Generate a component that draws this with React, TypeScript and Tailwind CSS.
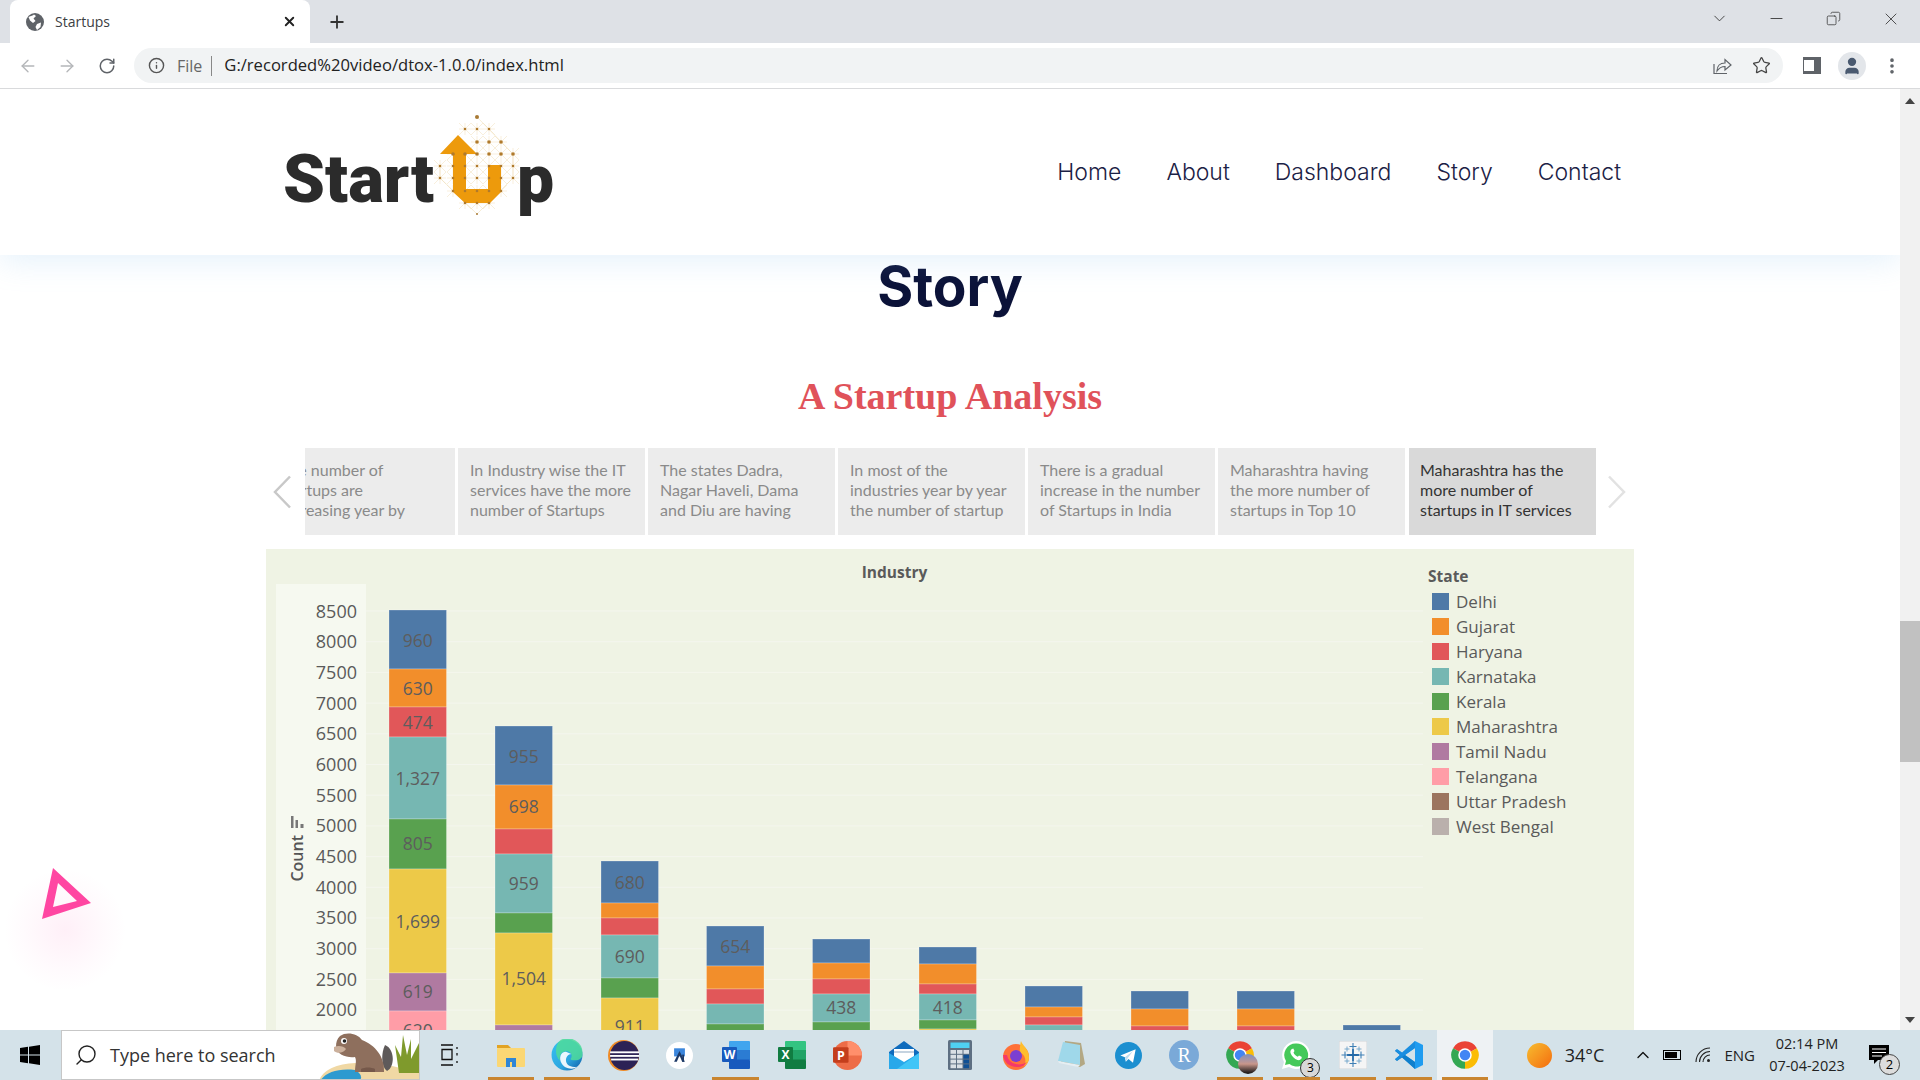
import { ArrowLeft, ArrowRight, ChevronDown, ChevronUp, Copy, Info, Minus, MoreVertical, Plus, RotateCw, Search, Star, User, X } from "lucide-react";

const firstTile = ["The number of", "startups are", "increasing year by"];

const tiles = [
  ["In Industry wise the IT", "services have the more", "number of Startups"],
  ["The states Dadra,", "Nagar Haveli, Dama", "and Diu are having"],
  ["In most of the", "industries year by year", "the number of startup"],
  ["There is a gradual", "increase in the number", "of Startups in India"],
  ["Maharashtra having", "the more number of", "startups in Top 10"],
];

const lastTile = ["Maharashtra has the", "more number of", "startups in IT services"];

const colors: Record<string, string> = {
  blue: "#4e79a7",
  orange: "#f28e2b",
  red: "#e15759",
  teal: "#76b7b2",
  green: "#59a14f",
  yellow: "#edc948",
  purple: "#b07aa1",
  pink: "#ff9da7",
};

const legend = [
  ["Delhi", "bg-[#4e79a7]"],
  ["Gujarat", "bg-[#f28e2b]"],
  ["Haryana", "bg-[#e15759]"],
  ["Karnataka", "bg-[#76b7b2]"],
  ["Kerala", "bg-[#59a14f]"],
  ["Maharashtra", "bg-[#edc948]"],
  ["Tamil Nadu", "bg-[#b07aa1]"],
  ["Telangana", "bg-[#ff9da7]"],
  ["Uttar Pradesh", "bg-[#9c755f]"],
  ["West Bengal", "bg-[#bab0ac]"],
];

const ticks = [8500, 8000, 7500, 7000, 6500, 6000, 5500, 5000, 4500, 4000, 3500, 3000, 2500, 2000];

// y values are page pixels, the svg starts at y=584 and x=366
const bars = [
  {
    x: 389,
    segs: [
      ["blue", 610, "960", 641],
      ["orange", 669, "630", 689],
      ["red", 707, "474", 723],
      ["teal", 737, "1,327", 779],
      ["green", 819, "805", 844],
      ["yellow", 869, "1,699", 922],
      ["purple", 973, "619", 992],
      ["pink", 1011, "620", 1031],
    ],
  },
  {
    x: 495,
    segs: [
      ["blue", 726, "955", 757],
      ["orange", 785, "698", 807],
      ["red", 829],
      ["teal", 854, "959", 884],
      ["green", 913],
      ["yellow", 933, "1,504", 979],
      ["purple", 1025],
    ],
  },
  {
    x: 601,
    segs: [
      ["blue", 861, "680", 883],
      ["orange", 903],
      ["red", 918],
      ["teal", 935, "690", 957],
      ["green", 978],
      ["yellow", 998, "911", 1027],
    ],
  },
  {
    x: 706.5,
    segs: [
      ["blue", 926, "654", 947],
      ["orange", 966],
      ["red", 989],
      ["teal", 1004],
      ["green", 1024],
    ],
  },
  {
    x: 812.5,
    segs: [
      ["blue", 939],
      ["orange", 963],
      ["red", 979],
      ["teal", 994, "438", 1008],
      ["green", 1022],
    ],
  },
  {
    x: 919,
    segs: [
      ["blue", 947],
      ["orange", 964],
      ["red", 984],
      ["teal", 994, "418", 1008],
      ["green", 1020],
      ["yellow", 1029],
    ],
  },
  {
    x: 1025,
    segs: [
      ["blue", 986],
      ["orange", 1007],
      ["red", 1017],
      ["teal", 1025],
    ],
  },
  {
    x: 1131,
    segs: [
      ["blue", 991],
      ["orange", 1009],
      ["red", 1026],
    ],
  },
  {
    x: 1237,
    segs: [
      ["blue", 991],
      ["orange", 1009],
      ["red", 1026],
    ],
  },
  { x: 1343, segs: [["blue", 1025]] },
] as { x: number; segs: (string | number)[][] }[];

const logoRows: [number, number[]][] = [
  [29, [205, 217, 229]],
  [42, [217, 229, 241]],
  [54, [193, 205, 217, 229, 241, 253]],
  [66, [180, 193, 205, 217, 229, 241, 253]],
  [78, [180, 193, 205, 217, 229, 241, 253]],
  [91, [193, 205, 217, 229, 241]],
  [103, [205, 217, 229]],
];

function Logo() {
  const dots = logoRows.flatMap(([y, xs]) => xs.map((x) => [x, y]));
  return (
    <svg viewBox="0 0 320 130" className="w-[320px] h-[130px] shrink-0">
      {dots.map(([x, y]) => (
        <path key={`${x}-${y}`} d={`M${x - 6} ${y - 6}L${x + 6} ${y + 6}M${x + 6} ${y - 6}L${x - 6} ${y + 6}M${x - 6} ${y}H${x + 6}M${x} ${y - 6}V${y + 6}`} stroke="#f0dfb8" strokeWidth="0.5" />
      ))}
      <path d="M217 17L253 54V78L217 114L180 78V66" fill="none" stroke="#f0dfb8" strokeWidth="0.6" />
      <path d="M198 35L217 54H206V89H228V65H241V92L230 103H205L193 92V54H180Z" fill="#ed9a0c" />
      {dots.map(([x, y]) => (
        <circle key={`${x}/${y}`} cx={x} cy={y} r={y === 42 || y === 54 ? 1.8 : 1.3} fill="#b07a2c" />
      ))}
      <circle cx="217" cy="17" r="2" fill="#a87a35" />
      <circle cx="217" cy="114" r="1" fill="#a87a35" />
      <text x="23" y="102" fontFamily="Roboto, sans-serif" fontWeight="900" fontSize="66" fill="#2b2b2b" textLength="151" lengthAdjust="spacingAndGlyphs">
        Start
      </text>
      <text x="257" y="102" fontFamily="Roboto, sans-serif" fontWeight="900" fontSize="66" fill="#2b2b2b">
        p
      </text>
    </svg>
  );
}

function ChromeIcon({ size = 34 }: { size?: number }) {
  return (
    <svg viewBox="0 0 24 24" width={size} height={size}>
      <path d="M12 12L2.47 6.5A11 11 0 0 1 21.53 6.5Z" fill="#ea4335" />
      <path d="M12 12L21.53 6.5A11 11 0 0 1 12 23Z" fill="#fbbc04" />
      <path d="M12 12L12 23A11 11 0 0 1 2.47 6.5Z" fill="#34a853" />
      <circle cx="12" cy="12" r="5.4" fill="#fff" />
      <circle cx="12" cy="12" r="4.2" fill="#4285f4" />
    </svg>
  );
}

function Explorer() {
  return (
    <svg viewBox="0 0 30 30" width="30" height="30">
      <path d="M1 5h11l3 3H1z" fill="#e2a323" />
      <rect x="1" y="8" width="28" height="19" rx="1" fill="#fbd774" />
      <path d="M10 27v-9h10v9h-4v-5h-2v5z" fill="#2f86d6" />
    </svg>
  );
}

function Edge() {
  return (
    <svg viewBox="0 0 30 30" width="32" height="32">
      <defs>
        <linearGradient id="edgeA" x1="0" y1="0" x2="1" y2="1">
          <stop offset="0" stopColor="#35c1f1" />
          <stop offset="0.6" stopColor="#2da6e0" />
          <stop offset="1" stopColor="#0c59a4" />
        </linearGradient>
      </defs>
      <circle cx="15" cy="15" r="14.5" fill="url(#edgeA)" />
      <path d="M8 1.5A14 14 0 0 1 29.4 15c0 3-3 5-7 5-3 0-4.5-1-4-1.500 2-2 1-7-4-7-5 0-7 5-6 9-6-6-4-16 .6-19.500z" fill="#4fdc9a" opacity="0.85" />
      <path d="M14 12c-5 0-7 6-4 11 2 4 8 6 13 4l1-1c-6 1-10-2-10-6 0-3 2-6 5-6z" fill="#fff" opacity="0.9" />
    </svg>
  );
}

function Eclipse() {
  return (
    <svg viewBox="0 0 30 30" width="31" height="31">
      <circle cx="15" cy="15" r="15" fill="#f08a24" />
      <circle cx="16" cy="15" r="14" fill="#2c2255" />
      <rect x="2" y="11" width="28" height="1.8" fill="#fff" />
      <rect x="2" y="14.500" width="28" height="1.8" fill="#fff" />
      <rect x="3" y="18" width="26" height="1.8" fill="#fff" />
    </svg>
  );
}

function AppA() {
  return (
    <svg viewBox="0 0 30 30" width="27" height="27">
      <circle cx="15" cy="15" r="15" fill="#fff" />
      <rect x="9" y="7" width="12" height="9" fill="#3b86dc" />
      <path d="M15 10l6 12h-3l-3-7-3 7H9z" fill="#1e3a67" />
      <rect x="18" y="14" width="2" height="8" fill="#1e3a67" />
    </svg>
  );
}

function Office({ letter, light, mid, dark, tile }: { letter: string; light: string; mid: string; dark: string; tile: string }) {
  return (
    <svg viewBox="0 0 30 30" width="30" height="30">
      <rect x="8" y="1" width="21" height="9.500" rx="1" fill={light} />
      <rect x="8" y="10" width="21" height="10" fill={mid} />
      <rect x="8" y="19.500" width="21" height="9.500" rx="1" fill={dark} />
      <rect x="1" y="7" width="15" height="15" rx="1" fill={tile} />
      <text x="8.500" y="19" textAnchor="middle" fontSize="12" fontWeight="700" fontFamily="'Open Sans', sans-serif" fill="#fff">
        {letter}
      </text>
    </svg>
  );
}

function Ppt() {
  return (
    <svg viewBox="0 0 30 30" width="31" height="31">
      <circle cx="15" cy="15" r="14" fill="#ed6c47" />
      <path d="M15 1a14 14 0 0 1 14 14H15z" fill="#ff8f6b" />
      <rect x="1" y="7" width="15" height="15" rx="1" fill="#c43e1c" />
      <text x="8.500" y="19" textAnchor="middle" fontSize="12" fontWeight="700" fontFamily="'Open Sans', sans-serif" fill="#fff">
        P
      </text>
    </svg>
  );
}

function Mail() {
  return (
    <svg viewBox="0 0 30 30" width="30" height="30">
      <path d="M15 1L0 12v17h30V12z" fill="#0f6cbd" />
      <path d="M5 9h20v9l-10 6-10-6z" fill="#fff" />
      <path d="M5 11h20v2H5z" fill="#c5d3e0" />
      <path d="M0 13l15 9 15-9v16H0z" fill="#28a8ea" />
      <path d="M30 13v16H8z" fill="#50d9ff" opacity="0.6" />
    </svg>
  );
}

function Calc() {
  const keys = Array.from({ length: 12 });
  return (
    <svg viewBox="0 0 24 30" width="24" height="30">
      <rect width="24" height="30" rx="1.500" fill="#5d6f82" />
      <rect x="2.500" y="2.500" width="19" height="5.500" fill="#4fd0f2" />
      {keys.map((_, i) => (
        <rect key={i} x={2.5 + (i % 3) * 6.5} y={10 + Math.floor(i / 3) * 4.8} width="5.500" height="3.800" fill={i % 3 === 2 && i > 2 ? "#0f4f94" : "#d9dfe5"} />
      ))}
    </svg>
  );
}

function Firefox() {
  return (
    <svg viewBox="0 0 30 30" width="30" height="32">
      <circle cx="15" cy="17" r="13" fill="#ff7139" />
      <path d="M20 1c1 4 8 8 8 16 0 5-2 7-5 9 3-5 1-11-3-13-2-1-1-8 0-12z" fill="#ffbd2e" />
      <circle cx="15" cy="16" r="6" fill="#7b3fd1" />
      <path d="M2 15c1 7 6 12 14 12 5 0 8-2 10-5-3 2-7 3-11 2-5-1-8-4-9-9z" fill="#f5386b" />
    </svg>
  );
}

function Notepad() {
  return (
    <svg viewBox="0 0 30 30" width="30" height="32">
      <path d="M8 1l16 2 4 21-5 3L4 22z" fill="#b3a884" />
      <path d="M6 2l17 3 0 20L1 21z" fill="#9fd8ea" />
      <path d="M1 21l22 4-2 2L2 23z" fill="#e6eef2" />
    </svg>
  );
}

function Telegram() {
  return (
    <svg viewBox="0 0 30 30" width="27" height="27">
      <circle cx="15" cy="15" r="15" fill="#1c8fd0" />
      <path d="M6 15L23 8l-3 15-5-4-3 3-1-5z" fill="#fff" />
      <path d="M11 17l9-7-6 8-1 3z" fill="#bcdcf0" />
    </svg>
  );
}

function Whatsapp() {
  return (
    <svg viewBox="0 0 30 30" width="30" height="30">
      <path d="M15 1a14 14 0 0 0-12 21L1 29l7-2A14 14 0 1 0 15 1z" fill="#fff" />
      <path d="M15 3.500a11.500 11.500 0 0 0-10 17.500l-1 4 4.500-1A11.500 11.500 0 1 0 15 3.500z" fill="#45c95a" />
      <path d="M11 9c-1 .5-2 2-1.500 4 1 3 4 6 7 7 2 .5 3.500-.5 4-1.500.3-1 .3-1.500 0-1.800l-2.500-1.200-1.200 1.300c-2-.8-3.500-2.300-4.300-4.300L13.500 11l-1.200-2.400z" fill="#fff" />
    </svg>
  );
}

function Tableau() {
  const b = "#3d7fb5";
  const cross = (x: number, y: number, s: number, w: number, c: string) => (
    <path key={`${x}${y}`} d={`M${x - s} ${y}H${x + s}M${x} ${y - s}V${y + s}`} stroke={c} strokeWidth={w} />
  );
  return (
    <svg viewBox="0 0 28 28" width="28" height="28">
      <rect width="28" height="28" fill="#f5f5f5" stroke="#d0d4d8" />
      {cross(14, 14, 6, 1.8, "#2469a8")}
      {cross(14, 5.5, 3.5, 1.1, b)}
      {cross(14, 22.5, 3.5, 1.1, b)}
      {cross(6, 14, 3.5, 1.1, b)}
      {cross(22, 14, 3.5, 1.1, b)}
      {cross(8, 8, 2.5, 0.9, "#6da3c9")}
      {cross(20, 8, 2.5, 0.9, "#6da3c9")}
      {cross(8, 20, 2.5, 0.9, "#6da3c9")}
      {cross(20, 20, 2.5, 0.9, "#6da3c9")}
    </svg>
  );
}

function Vscode() {
  return (
    <svg viewBox="0 0 30 30" width="30" height="30">
      <path d="M21 1l8 4v20l-8 4-13-12z" fill="#1f9cf0" />
      <path d="M21 8L11 15l10 7z" fill="#d4e2e9" />
      <path d="M1 11l2-1.500L21 22v7L8 17.500 3 21l-2-1.500L6 15z" fill="#0f7fcc" />
      <path d="M1 19l2 1.500L21 8V1L8 12.500 3 9 1 10.500 6 15z" fill="#1a8ee0" />
    </svg>
  );
}

function Beaver() {
  return (
    <svg viewBox="0 0 100 50" className="absolute right-0 top-0 w-[100px] h-[50px]">
      <path d="M0 50C4 38 20 32 40 32C60 30 85 38 100 42V50Z" fill="#f0d8a4" />
      <path d="M1 50C6 42 18 37 36 39C42 42 44 47 40 50Z" fill="#2d9ad0" />
      <path d="M80 42L76 14L82 26L84 4L88 24L92 8L92 28L100 12V42Z" fill="#7f9a2c" />
      <path d="M66 14C76 18 76 36 68 40C62 36 62 22 66 14Z" fill="#5e5a5a" />
      <path d="M21 5C28 0 39 3 43 9C56 14 66 26 65 41H36C36 34 38 30 36 26C28 27 18 24 17 16C17 11 18 8 21 5Z" fill="#8e6f5d" />
      <circle cx="25" cy="10" r="3" fill="#fff" />
      <circle cx="25.500" cy="10" r="1.800" fill="#222" />
      <path d="M15 16c4-2 10-1 12 2-2 4-9 5-12 2z" fill="#cbb09c" />
      <path d="M42 38c4-2 10-2 14 0v3H42z" fill="#75584a" />
    </svg>
  );
}

const taskIcons = [
  { el: <Explorer />, on: true },
  { el: <Edge />, on: true },
  { el: <Eclipse /> },
  { el: <AppA /> },
  { el: <Office letter="W" light="#41a5ee" mid="#2b7cd3" dark="#185abd" tile="#185abd" />, on: true },
  { el: <Office letter="X" light="#33c481" mid="#21a366" dark="#107c41" tile="#107c41" /> },
  { el: <Ppt /> },
  { el: <Mail /> },
  { el: <Calc /> },
  { el: <Firefox /> },
  { el: <Notepad /> },
  { el: <Telegram /> },
  {
    el: (
      <div className="w-[30px] h-[30px] rounded-full bg-[#7aa9d8] text-white flex items-center justify-center font-['Liberation_Serif',serif] text-[20px]">
        R
      </div>
    ),
  },
  {
    el: (
      <div className="relative">
        <ChromeIcon size={30} />
        <div className="absolute right-[-3px] bottom-[-4px] w-[20px] h-[20px] rounded-full bg-gradient-to-b from-[#7a8fc0] via-[#c9968a] to-[#111]" />
      </div>
    ),
    on: true,
  },
  {
    el: (
      <div className="relative">
        <Whatsapp />
        <div className="absolute right-[-9px] bottom-[-8px] w-[20px] h-[20px] rounded-full bg-[#d8d8d8] border border-[#333] text-[12px] leading-[18px] text-center text-black">
          3
        </div>
      </div>
    ),
    on: true,
  },
  { el: <Tableau />, on: true },
  { el: <Vscode />, on: true },
  { el: <ChromeIcon size={30} />, on: true, active: true },
];

export default function App() {
  return (
    <div className="w-[1920px] h-[1080px] overflow-hidden flex flex-col bg-white font-['Open_Sans',sans-serif]">
      {/* Browser tabs */}
      <div className="h-[43px] shrink-0 bg-[#dee1e6] flex items-end text-[#3c4043]">
        <div className="ml-[10px] w-[300px] h-[43px] bg-white rounded-t-[8px] flex items-center pl-[15px] pr-[13px]">
          <svg viewBox="0 0 20 20" className="w-[20px] h-[20px] shrink-0">
            <circle cx="10" cy="10" r="9" fill="#5f6368" />
            <path d="M3.500 5C6 4 8 3.500 9 2.500L11 4 8.500 6.500 10.500 9 8 11 5 8.500zM12 12l4-1.500L15.500 15 12 18l-1.500-3z" fill="#fff" />
          </svg>
          <span className="ml-[10px] text-[14px] flex-1">Startups</span>
          <X className="w-[15px] h-[15px] text-[#222]" strokeWidth={3} />
        </div>
        <div className="ml-[17px] h-[43px] flex items-center">
          <Plus className="w-[20px] h-[20px] text-[#333]" strokeWidth={2.2} />
        </div>
        <div className="ml-auto h-[37px] self-start flex items-center text-[#333]">
          <ChevronDown className="w-[19px] h-[19px] mr-[38px]" strokeWidth={1.1} />
          <Minus className="w-[19px] h-[19px] mr-[40px]" strokeWidth={1.1} />
          <Copy className="w-[15px] h-[15px] mr-[40px] -scale-x-100" strokeWidth={1.2} />
          <X className="w-[20px] h-[20px] mr-[19px]" strokeWidth={1} />
        </div>
      </div>

      {/* Toolbar */}
      <div className="h-[46px] shrink-0 border-b border-[#d9dadc] bg-white flex items-center">
        <ArrowLeft className="ml-[18px] w-[20px] h-[20px] text-[#b4b6b9]" strokeWidth={1.6} />
        <ArrowRight className="ml-[19px] w-[20px] h-[20px] text-[#b4b6b9]" strokeWidth={1.6} />
        <RotateCw className="ml-[21px] w-[18px] h-[18px] text-[#5f6368]" strokeWidth={2} />
        <div className="ml-[18px] w-[1649px] h-[35px] rounded-full bg-[#f1f3f4] flex items-center pl-[14px]">
          <Info className="w-[17px] h-[17px] text-[#555]" strokeWidth={2} />
          <span className="ml-[12px] text-[16px] text-[#666]">File</span>
          <span className="ml-[9px] w-px h-[20px] bg-[#888]" />
          <span className="ml-[12px] text-[16.6px] text-[#222]">G:/recorded%20video/dtox-1.0.0/index.html</span>
          <svg viewBox="0 0 20 20" className="ml-auto w-[20px] h-[20px] text-[#5f6368]" fill="none" stroke="currentColor" strokeWidth="1.200">
            <path d="M2 8v9.500h13" />
            <path d="M5 15c0-5 3-8 8-8V3.500l6 5.500-6 5V10.500c-4 0-6 1.500-8 4.500z" />
          </svg>
          <Star className="ml-[20px] mr-[12px] w-[19px] h-[19px] text-[#444]" strokeWidth={1.6} />
        </div>
        <div className="ml-[20px] w-[18px] h-[17px] bg-[#5f6368] flex justify-start pl-[1px] py-[3px]">
          <div className="w-[10px] h-full bg-white" />
        </div>
        <div className="ml-[17px] w-[28px] h-[28px] rounded-full bg-[#e3e6ea] flex items-center justify-center">
          <User className="w-[20px] h-[20px] text-[#4a5a70] fill-[#4a5a70]" />
        </div>
        <MoreVertical className="ml-[16px] w-[20px] h-[20px] text-[#5f6368]" strokeWidth={2.4} />
      </div>

      {/* Page */}
      <div className="flex-1 min-h-0 flex">
        <div className="relative flex-1 min-w-0 overflow-hidden">
          <header className="relative z-10 h-[166px] bg-white shadow-[0_6px_30px_rgba(120,185,235,0.2)]">
            <div className="mx-auto w-[1368px] h-full flex items-center justify-between pr-[13px] font-['Inter',sans-serif] font-light text-[23px] text-[#1b2145]">
              <div className="-ml-[6px] self-start mt-[11px]">
                <Logo />
              </div>
              <nav className="flex gap-[45px]">
                <span>Home</span>
                <span>About</span>
                <span>Dashboard</span>
                <span>Story</span>
                <span>Contact</span>
              </nav>
            </div>
          </header>

          <h1 className="h-[62px] text-center font-['Inter',sans-serif] font-bold text-[55px] leading-[62px] text-[#0b1238]">Story</h1>

          <h2 className="mt-[59px] h-[40px] text-center font-['Liberation_Serif',serif] font-bold text-[38px] leading-[40px] text-[#e0525a]">
            A Startup Analysis
          </h2>

          <div className="mx-auto mt-[32px] w-[1368px] h-[87px] flex items-center">
            <svg viewBox="0 0 20 34" className="ml-[6px] w-[20px] h-[34px] shrink-0" fill="none" stroke="#c8c8c8" strokeWidth="2.500">
              <path d="M18 1.500L3 17L18 32.500" />
            </svg>
            <div className="ml-[13px] w-[150px] h-full shrink-0 overflow-hidden bg-[#ececec] flex justify-end">
              <div className="w-[187px] shrink-0 pl-[12px] pt-[12px] text-[16px] leading-[20px] text-[#8a8a8a] font-['Lato',sans-serif] whitespace-nowrap">
                {firstTile.map((l) => (
                  <div key={l}>{l}</div>
                ))}
              </div>
            </div>
            <div className="flex h-full gap-[3px] ml-[3px]">
              {tiles.map((t) => (
                <div key={t[0]} className="w-[187px] h-full overflow-hidden bg-[#ececec] pl-[12px] pt-[12px] text-[16px] leading-[20px] text-[#8a8a8a] font-['Lato',sans-serif] whitespace-nowrap">
                  {t.map((l) => (
                    <div key={l}>{l}</div>
                  ))}
                </div>
              ))}
              <div className="w-[187px] h-full ml-[1px] bg-[#d9d9d9] pl-[11px] pt-[12px] text-[16px] leading-[20px] text-[#333] font-['Lato',sans-serif] whitespace-nowrap">
                {lastTile.map((l) => (
                  <div key={l}>{l}</div>
                ))}
              </div>
            </div>
            <svg viewBox="0 0 20 34" className="ml-[11px] w-[20px] h-[34px] shrink-0" fill="none" stroke="#e2e2e2" strokeWidth="2.500">
              <path d="M2 1.500L17 17L2 32.500" />
            </svg>
          </div>

          {/* Tableau chart */}
          <div className="mx-auto mt-[14px] w-[1368px] h-[530px] bg-[#eff3e4] flex pl-[10px]">
            <div className="mt-[35px] w-[90px] h-[495px] bg-[#f6f9f0] flex shrink-0 overflow-hidden">
              <div className="w-[28px] flex flex-col items-center pt-[232px] pl-[14px]">
                <svg viewBox="0 0 13 12" className="w-[13px] h-[12px] shrink-0" fill="#777">
                  <rect x="0" y="0" width="2.500" height="12" />
                  <rect x="4.500" y="4" width="2.500" height="8" />
                  <rect x="9.500" y="8" width="3" height="4" />
                </svg>
                <span className="mt-[7px] [writing-mode:vertical-rl] rotate-180 text-[16px] leading-[16px] font-semibold text-[#555]">Count</span>
              </div>
              <div className="flex-1 pt-[11.5px] pr-[9px] text-right text-[18px] text-[#5a5a5a]">
                {ticks.map((t) => (
                  <div key={t} className="h-[30.7px] leading-[30.7px]">
                    {t}
                  </div>
                ))}
              </div>
            </div>

            <div className="w-[1057px] shrink-0">
              <div className="h-[35px] pt-[12px] text-center text-[15.5px] leading-[22px] font-bold text-[#5a5a5a]">Industry</div>
              <svg viewBox="366 584 1057 496" className="w-[1057px] h-[496px] block">
                {ticks.map((t, i) => (
                  <line key={t} x1="366" x2="1423" y1={611 + i * 30.7} y2={611 + i * 30.7} stroke="#f4f6ee" strokeWidth="1" />
                ))}
                {bars.map((b) =>
                  b.segs.map((s, i) => {
                    const top = s[1] as number;
                    const next = i + 1 < b.segs.length ? (b.segs[i + 1][1] as number) : 1080;
                    return (
                      <g key={`${b.x}-${top}`}>
                        <rect x={b.x} y={top} width="57.500" height={next - top} fill={colors[s[0] as string]} stroke="#ffffff" strokeOpacity="0.25" />
                        {s[2] && (
                          <text x={b.x + 28.75} y={(s[3] as number) + 6} textAnchor="middle" fontSize="17.500" fill="#5d5d5d" fontFamily="'Open Sans', sans-serif">
                            {s[2]}
                          </text>
                        )}
                      </g>
                    );
                  })
                )}
              </svg>
            </div>

            <div className="ml-[5px] pt-[16px] text-[#5a5a5a]">
              <div className="text-[15.5px] leading-[22px] font-bold text-[#5a5a5a]">State</div>
              <div className="mt-[6px] pl-[4px] flex flex-col gap-[8px]">
                {legend.map(([name, bg]) => (
                  <div key={name} className="flex items-center h-[17px]">
                    <span className={`w-[17px] h-[17px] ${bg}`} />
                    <span className="ml-[7px] text-[17px] leading-[17px]">{name}</span>
                  </div>
                ))}
              </div>
            </div>
          </div>

          {/* Floating shape */}
          <div className="absolute left-[5px] top-[781px] w-[120px] h-[120px] rounded-full bg-[radial-gradient(circle,rgba(255,170,215,0.18)_0%,rgba(255,210,235,0.09)_50%,rgba(255,255,255,0)_72%)]" />
          <svg viewBox="0 0 60 60" className="absolute left-[36px] top-[773px] w-[60px] h-[60px]">
            <path fillRule="evenodd" d="M17 6L55 41L6 57ZM22 21L17 45L41 39Z" fill="#ff46a2" />
          </svg>
        </div>

        {/* Scrollbar */}
        <div className="w-[20px] shrink-0 bg-[#f1f1f1] flex flex-col items-center">
          <div className="mt-[9px] w-0 h-0 border-x-[5px] border-x-transparent border-b-[6px] border-b-[#444]" />
          <div className="mt-[517px] w-full h-[141px] bg-[#c1c1c1]" />
          <div className="mt-auto mb-[7px] w-0 h-0 border-x-[5px] border-x-transparent border-t-[6px] border-t-[#444]" />
        </div>
      </div>

      {/* Windows taskbar */}
      <div className="h-[50px] shrink-0 bg-[#d4e2e9] flex items-center">
        <svg viewBox="0 0 20 20" className="ml-[20px] w-[20px] h-[20px] shrink-0" fill="#000">
          <path d="M0 3l8-1.200v7.700H0zM9 1.700L20 0v9.500H9zM0 10.500h8v7.700L0 17zM9 10.500h11V20L9 18.300z" />
        </svg>
        <div className="relative ml-[21px] w-[359px] h-[50px] bg-white border border-[#c7c7c7] flex items-center pl-[12px] shrink-0 overflow-hidden">
          <Search className="w-[24px] h-[24px] -scale-x-100 text-[#222]" strokeWidth={1.4} />
          <span className="ml-[12px] text-[18px] text-[#333]">Type here to search</span>
          <Beaver />
        </div>
        <div className="ml-[7px] w-[56.1px] h-full flex items-center justify-center pr-[10px] shrink-0">
          <svg viewBox="0 0 20 22" className="w-[20px] h-[22px]" fill="none" stroke="#111" strokeWidth="1.300">
            <path d="M1 1h12M1 21h12M2 5.500h10v10H2zM17 3v2M17 9v2.500M17 17v2" />
          </svg>
        </div>
        {taskIcons.map((t, i) => (
          <div key={i} className={`relative w-[56.1px] h-full shrink-0 flex items-center justify-center ${t.active ? "bg-[#eef2f4]" : ""}`}>
            {t.el}
            {t.on && <div className="absolute bottom-0 left-[5px] right-[5px] h-[3px] bg-[#c9852f]" />}
          </div>
        ))}
        <div className="ml-[34px] w-[25px] h-[25px] rounded-full bg-gradient-to-br from-[#f5bc2f] to-[#f36a0c] shrink-0" />
        <span className="ml-[13px] text-[18px] text-[#222] shrink-0">34°C</span>
        <ChevronUp className="ml-[29px] w-[20px] h-[20px] text-[#111] shrink-0" strokeWidth={1.6} />
        <div className="ml-[10px] w-[18px] h-[10px] border border-black p-[1px] shrink-0">
          <div className="w-[12px] h-full bg-black" />
        </div>
        <svg viewBox="0 0 16 16" className="ml-[14px] w-[16px] h-[16px] shrink-0" fill="none" stroke="#222" strokeWidth="1.100">
          <path d="M1 15A14 14 0 0 1 15 1M4.500 15A10.500 10.500 0 0 1 15 4.500M8 15a7 7 0 0 1 7-7" />
          <circle cx="13.500" cy="13.500" r="1.500" fill="#222" stroke="none" />
        </svg>
        <span className="ml-[13px] text-[15px] text-[#222] shrink-0">ENG</span>
        <div className="ml-[13px] w-[78px] shrink-0 flex flex-col items-center text-[14.5px] leading-[22px] text-[#222] whitespace-nowrap">
          <span>02:14 PM</span>
          <span>07-04-2023</span>
        </div>
        <div className="relative ml-[23px] shrink-0">
          <svg viewBox="0 0 20 20" className="w-[20px] h-[20px]">
            <path d="M0 0h20v15H9l-4 4v-4H0z" fill="#000" />
            <path d="M3 4h14M3 7.500h14M3 11h10" stroke="#fff" strokeWidth="1" />
          </svg>
          <div className="absolute left-[10px] top-[9px] w-[21px] h-[21px] rounded-full bg-[#dcdcdc] border border-[#444] text-[13px] leading-[19px] text-center text-black">
            2
          </div>
        </div>
      </div>
    </div>
  );
}
